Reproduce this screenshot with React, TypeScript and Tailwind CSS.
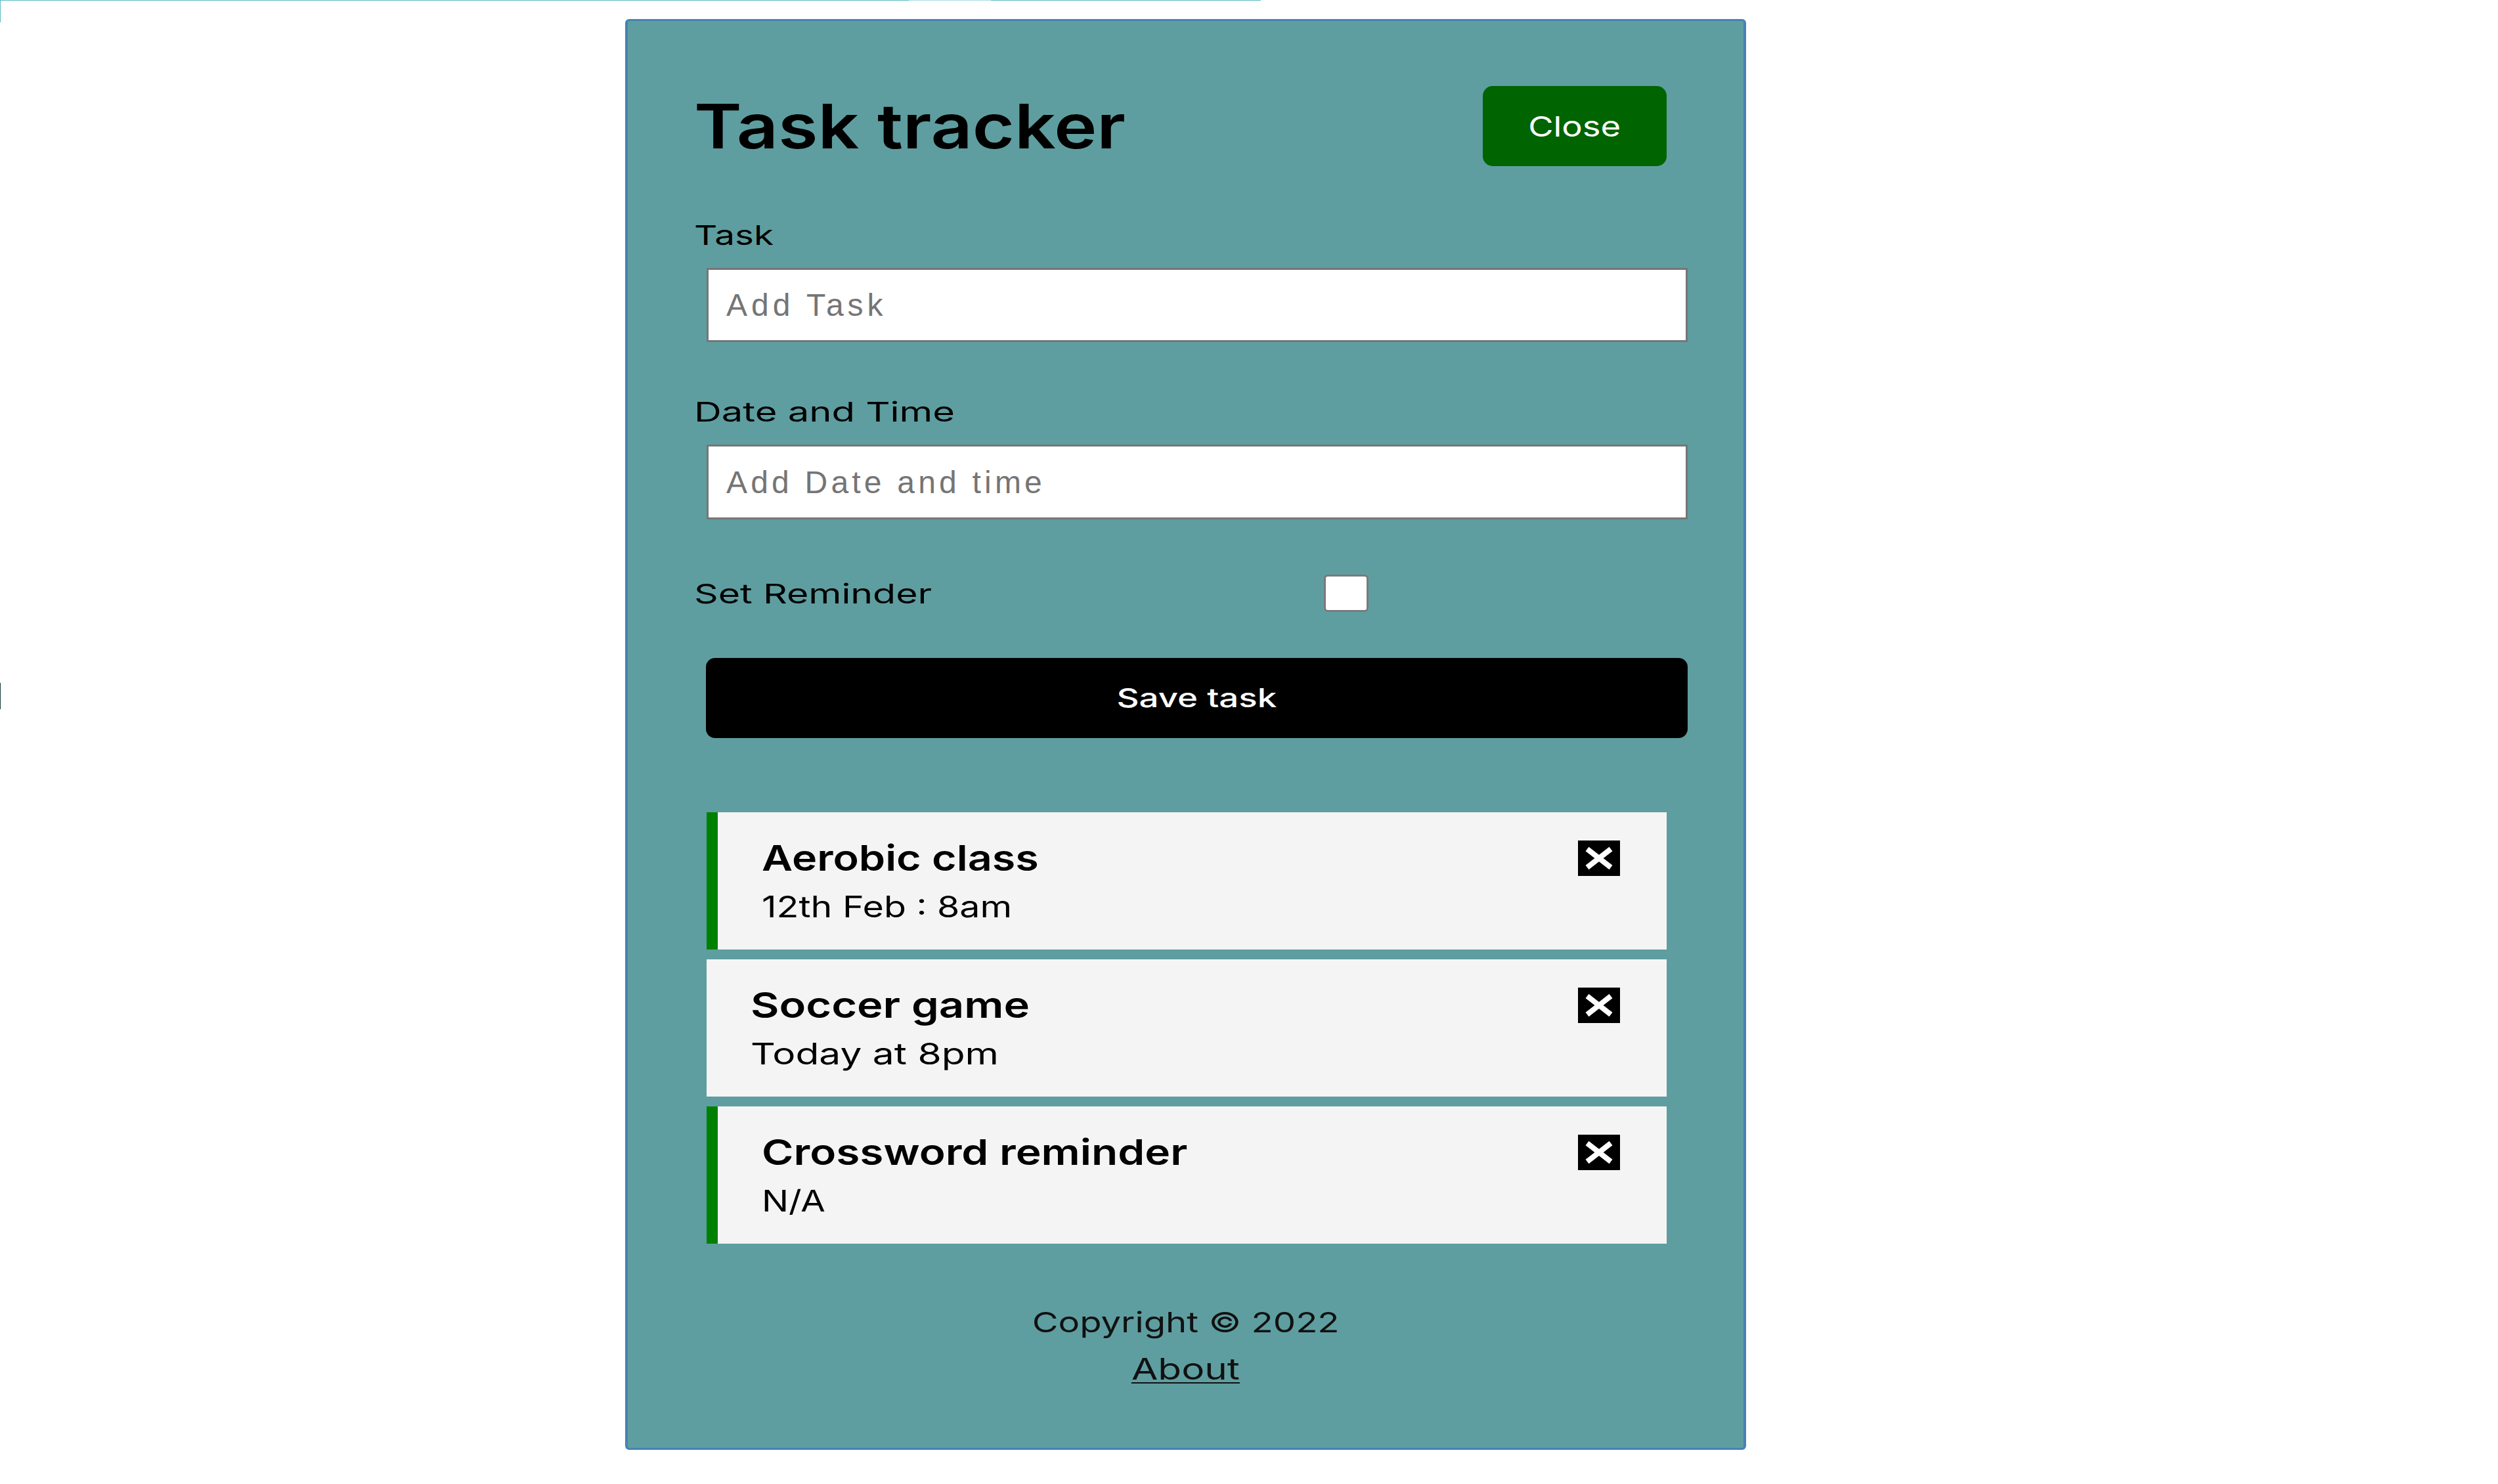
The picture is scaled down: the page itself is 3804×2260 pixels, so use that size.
const items = [
  {
    title: "Aerobic class",
    date: "12th Feb : 8am",
    reminder: true,
    titleCls: "inline-block origin-left scale-x-[1.197] text-[54px] font-semibold leading-[60px]",
    dateCls: "inline-block origin-left scale-x-[1.233] text-[45px] leading-[54px]",
  },
  {
    title: "Soccer game",
    date: "Today at 8pm",
    reminder: false,
    titleCls: "inline-block origin-left scale-x-[1.238] text-[54px] font-semibold leading-[60px]",
    dateCls: "inline-block origin-left scale-x-[1.303] text-[45px] leading-[54px]",
  },
  {
    title: "Crossword reminder",
    date: "N/A",
    reminder: true,
    titleCls: "inline-block origin-left scale-x-[1.218] text-[54px] font-semibold leading-[60px]",
    dateCls: "inline-block origin-left scale-x-[1.211] text-[45px] leading-[54px]",
  },
];

function XIcon() {
  return (
    <svg width="64" height="54" viewBox="0 0 64 54" className="block shrink-0">
      <rect width="64" height="54" fill="#000" />
      <path d="M14 13 L50 41 M50 13 L14 41" stroke="#fff" strokeWidth="8" />
    </svg>
  );
}

export default function App() {
  return (
    <div className="relative h-[2260px] w-[3804px] overflow-hidden bg-white font-['Inter',sans-serif] text-black">
      <div className="absolute left-0 top-0 h-[1px] w-[1920px] bg-[#5bbcc8]" />
      <div className="absolute left-[1384px] top-0 h-[1px] w-[125px] bg-[#a8dde3]" />
      <div className="absolute left-0 top-0 h-[34px] w-[1px] bg-[#5bbcc8]" />
      <div className="absolute left-0 top-[1040px] h-[40px] w-[1px] bg-[#1a3a3a]" />

      <div className="pl-[952px] pt-[29px]">
        <div className="box-border h-[2179px] w-[1707px] rounded-[6px] border-x-4 border-y-[3px] border-[#4682b4] bg-[#5f9ea0] px-[101px] pt-[99px]">
          <header className="flex h-[122px] w-[1481px] items-center justify-between">
            <h1 className="inline-block origin-left scale-x-[1.172] text-[94px] font-semibold leading-none">Task tracker</h1>
            <button className="h-[122px] w-[280px] rounded-[15px] bg-[#006400] text-white">
              <span className="inline-block scale-x-[1.222] text-[43px]">Close</span>
            </button>
          </header>

          <label className="mt-[80px] block text-[41px] leading-[50px]">
            <span className="inline-block origin-left scale-x-[1.336]">Task</span>
          </label>
          <input
            placeholder="Add Task"
            className="mt-[25px] ml-[19px] box-border block h-[113px] w-[1494px] border-[3px] border-[#767676] bg-white pl-[27px] font-['Liberation_Sans',Arial,sans-serif] text-[48px] tracking-[6px] outline-none placeholder:text-[#757575]"
          />

          <label className="mt-[81px] block text-[41px] leading-[50px]">
            <span className="inline-block origin-left scale-x-[1.412]">Date and Time</span>
          </label>
          <input
            placeholder="Add Date and time"
            className="mt-[25px] ml-[19px] box-border block h-[114px] w-[1494px] border-[3px] border-[#767676] bg-white pl-[27px] font-['Liberation_Sans',Arial,sans-serif] text-[48px] tracking-[5.2px] outline-none placeholder:text-[#757575]"
          />

          <div className="mt-[84px] flex h-[57px] items-center">
            <label className="w-[959px] text-[41px] leading-[50px]">
              <span className="inline-block origin-left scale-x-[1.396]">Set Reminder</span>
            </label>
            <div className="box-border h-[57px] w-[68px] rounded-[6px] border-[3px] border-[#7a7a7a] bg-white" />
          </div>

          <button className="mt-[70px] ml-[18px] block h-[122px] w-[1495px] rounded-[14px] bg-black text-white">
            <span className="inline-block scale-x-[1.32] text-[40px] font-medium">Save task</span>
          </button>

          <div className="mt-[113px] ml-[19px] flex w-[1462px] flex-col gap-[15px]">
            {items.map((it) => (
              <div
                key={it.title}
                className={
                  it.reminder
                    ? "box-border h-[209px] border-l-[17px] border-[#008000] bg-[#f4f4f4] pt-[40px] pl-[67px] pr-[71px]"
                    : "box-border h-[209px] bg-[#f4f4f4] pt-[40px] pl-[67px] pr-[71px]"
                }
              >
                <h3 className="flex h-[60px] items-center justify-between">
                  <span className={it.titleCls}>{it.title}</span>
                  <XIcon />
                </h3>
                <p className="mt-[17px] h-[54px]">
                  <span className={it.dateCls}>{it.date}</span>
                </p>
              </div>
            ))}
          </div>

          <footer className="mt-[93px] text-center">
            <p className="h-[52px] text-[43px] leading-[52px] text-[#111]">
              <span className="inline-block scale-x-[1.267]">Copyright © 2022</span>
            </p>
            <a
              href="#"
              className="mt-[19px] inline-block scale-x-[1.3] text-[45px] leading-[54px] text-[#111] underline decoration-2 underline-offset-[4px]"
            >
              About
            </a>
          </footer>
        </div>
      </div>
    </div>
  );
}
